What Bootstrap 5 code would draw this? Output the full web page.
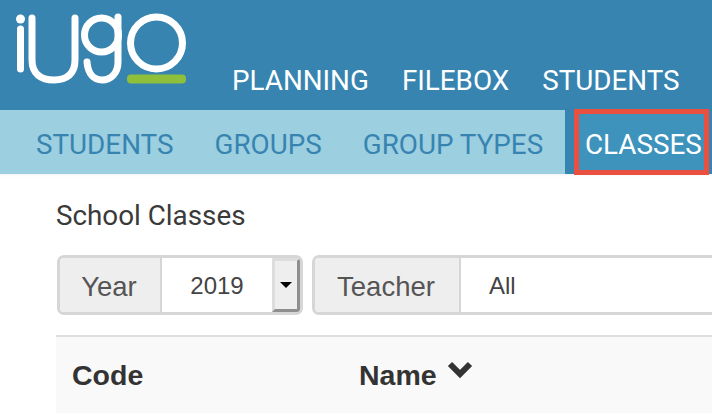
<!DOCTYPE html>
<html lang="en">
<head>
    <meta charset="UTF-8">
    <meta name="viewport" content="width=device-width, initial-scale=1">
    <title>School Classes</title>
    <link rel="stylesheet" href="https://cdn.jsdelivr.net/npm/bootstrap@5.3.0/dist/css/bootstrap.min.css">
    <style>
        html, body { height: 414px; overflow: hidden; }
        body { background: #fff; font-family: "Liberation Sans", Arial, sans-serif; }
        .top-bar { height: 110px; background: #3784b1; }
        .logo-box { width: 232px; }
        .main-links { gap: 33px; padding-bottom: 15px; }
        .main-links a { color: #fff; font: 400 27.8px/1 Roboto, sans-serif; text-decoration: none; }
        .sub-bar { height: 64px; background: #9ccfe0; box-shadow: 0 1px 3px rgba(0,0,0,.06); }
        .sub-links { gap: 41px; padding: 5px 0 0 36px; width: 565px; }
        .sub-links a { color: #3784b1; font: 400 27.8px/1 Roboto, sans-serif; text-decoration: none; }
        .active-zone { background: #3784b1; flex: 1; padding-left: 9px; padding-right: 3px; }
        .active-tab { height: 66px; margin-top: -1px; border: 5px solid #e9503f; background: #3d93bb; color: #fff; font: 400 27.8px/1 Roboto, sans-serif; padding: 5px 0 0 6px; white-space: nowrap; }
        .page-title { padding: 28px 0 0 56px; height: 81px; font: 400 27.8px/28px Roboto, sans-serif; color: #3a3a3a; }
        .filter-row { padding-left: 57px; gap: 9px; height: 80px; }
        .filter-group { flex-shrink: 0; height: 60px; border: 3px solid #d6d6d6; border-radius: 7px; background: #fff; font-size: 27.5px; color: #555; overflow: hidden; }
        .filter-label { background: #eee; border-right: 2px solid #d6d6d6; padding: 3px 2px 0 0; }
        .year-label { width: 102px; }
        .year-value { width: 110px; font-size: 24px; color: #444; padding-top: 2px; }
        .year-arrow { width: 28px; background: #eee; border-style: solid; border-width: 3px; border-color: #ddd #8e8e8e #8e8e8e #ddd; }
        .year-arrow::after { content: ""; border-style: solid; border-width: 6px 6px 0; border-color: #000 transparent transparent; }
        .teacher-group { width: 400px; border-right: 0; border-radius: 7px 0 0 7px; }
        .teacher-label { width: 146px; }
        .teacher-value { padding: 2px 0 0 28px; font-size: 24px; color: #444; }
        .class-table { margin-left: 56px; border-top: 2px solid #ddd; background: #f9f9f9; height: 78px; padding-top: 17px; font-size: 28.5px; font-weight: 700; color: #333; }
        .code-head { width: 303px; padding-left: 16px; }
        .name-head { gap: 10px; }
    </style>
</head>
<body>
    <div class="top-bar d-flex">
        <div class="logo-box">
            <svg width="200" height="90" viewBox="0 0 200 90">
                <g fill="none" stroke="#fff" stroke-width="7" stroke-linecap="round">
                    <path d="M20.500 29V69"/>
                    <path d="M32 18V60C32 74 41 80 54 80S75 74 75 60V18"/>
                    <circle cx="101.500" cy="35" r="17"/>
                    <path d="M118 17V62C118 73 111 80 102 80C94 80 88 74 87 62"/>
                    <circle cx="156.500" cy="43" r="26"/>
                </g>
                <circle cx="20.500" cy="19" r="4.500" fill="#fff"/>
                <rect x="127" y="74.500" width="59" height="9" rx="4" fill="#8fc03c"/>
            </svg>
        </div>
        <nav class="main-links d-flex align-items-end">
            <a href="#">PLANNING</a>
            <a href="#">FILEBOX</a>
            <a href="#">STUDENTS</a>
        </nav>
    </div>

    <div class="sub-bar d-flex">
        <nav class="sub-links d-flex align-items-center">
            <a href="#">STUDENTS</a>
            <a href="#">GROUPS</a>
            <a href="#">GROUP TYPES</a>
        </nav>
        <div class="active-zone d-flex">
            <div class="active-tab flex-grow-1 d-flex align-items-center">CLASSES</div>
        </div>
    </div>

    <h1 class="page-title m-0">School Classes</h1>

    <div class="filter-row d-flex">
        <div class="filter-group d-flex">
            <div class="filter-label year-label d-flex align-items-center justify-content-center">Year</div>
            <div class="year-value d-flex align-items-center justify-content-center">2019</div>
            <div class="year-arrow d-flex align-items-center justify-content-center"></div>
        </div>
        <div class="filter-group teacher-group d-flex">
            <div class="filter-label teacher-label d-flex align-items-center justify-content-center">Teacher</div>
            <div class="teacher-value d-flex align-items-center">All</div>
        </div>
    </div>

    <div class="class-table d-flex">
        <div class="code-head">Code</div>
        <div class="name-head d-flex">
            <span>Name</span>
            <svg width="26" height="34" viewBox="0 0 26 34">
                <path d="M3 10L13 20L23 10" fill="none" stroke="#333" stroke-width="6"/>
            </svg>
        </div>
    </div>
</body>
</html>
